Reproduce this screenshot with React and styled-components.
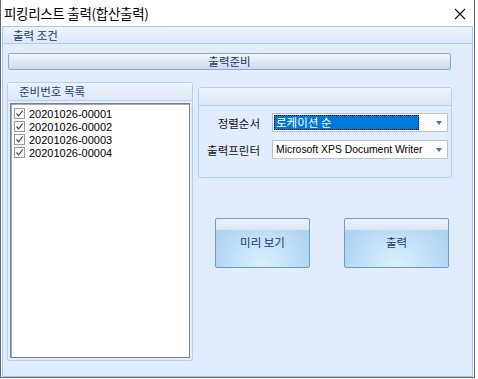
import React from 'react'
import styled, { createGlobalStyle } from 'styled-components'

const items = ['20201026-00001', '20201026-00002', '20201026-00003', '20201026-00004']

const App = () => {
  return (
    <>
      <Global />
      <Window>
        <TitleBar>
          <Title>피킹리스트 출력(합산출력)</Title>
          <Close width="12" height="12" viewBox="0 0 12 12">
            <path d="M1 1 L11 11 M11 1 L1 11" stroke="#111" strokeWidth="1.1" fill="none" />
          </Close>
        </TitleBar>
        <Panel>
          <SectionHeader>출력 조건</SectionHeader>
          <Content>
            <PrepBar>출력준비</PrepBar>
            <Columns>
              <Group>
                <GroupHeader>준비번호 목록</GroupHeader>
                <ListBox>
                  {items.map((it) => (
                    <Item key={it}>
                      <Check>
                        <svg width="9" height="9" viewBox="0 0 9 9">
                          <path d="M1.5 4.5 L3.6 6.8 L7.8 1.5" stroke="#444" strokeWidth="1.2" fill="none" />
                        </svg>
                      </Check>
                      {it}
                    </Item>
                  ))}
                </ListBox>
              </Group>
              <RightCol>
                <OptGroup>
                  <GroupHeader />
                  <Form>
                    <Label>정렬순서</Label>
                    <Combo>
                      <Selected>로케이션 순</Selected>
                      <Arrow />
                    </Combo>
                    <Label>출력프린터</Label>
                    <Combo>
                      <Value>Microsoft XPS Document Writer</Value>
                      <Arrow />
                    </Combo>
                  </Form>
                </OptGroup>
                <Buttons>
                  <BigButton $w={95}><span>미리 보기</span></BigButton>
                  <BigButton $w={105}><span>출력</span></BigButton>
                </Buttons>
              </RightCol>
            </Columns>
          </Content>
        </Panel>
      </Window>
    </>
  )
}

export default App

const Global = createGlobalStyle`
body {
  margin: 0;
  background: #ffffff;
  font-family: "Noto Sans CJK KR", "Liberation Sans", sans-serif;
}
`
const Window = styled.div`
width: 475px;
height: 378px;
box-sizing: border-box;
border: 1px solid #5e6a78;
border-top: none;
display: flex;
flex-direction: column;
background: #ffffff;
`
const TitleBar = styled.div`
height: 26px;
display: flex;
align-items: center;
justify-content: space-between;
padding: 0 8px 0 3px;
`
const Title = styled.div`
font-size: 13.5px;
color: #000;
letter-spacing: -0.3px;
line-height: 16px;
margin-top: -1px;
`
const Close = styled.svg`
display: block;
margin-top: 1px;
`
const Panel = styled.div`
flex: 1;
margin: 0 0 0 1px;
width: 471px;
box-sizing: border-box;
border: 1px solid #a9c7ec;
background: #e1edfd;
display: flex;
flex-direction: column;
`
const SectionHeader = styled.div`
height: 17px;
box-sizing: border-box;
border-bottom: 1px solid #b3cdef;
background: linear-gradient(#edf4fd, #dbe8f9);
font-size: 11.5px;
line-height: 16px;
color: #1d3766;
padding-left: 10px;
`
const Content = styled.div`
padding: 9px 0 0 5px;
display: flex;
flex-direction: column;
`
const PrepBar = styled.div`
width: 443px;
height: 17px;
box-sizing: border-box;
border: 1px solid #8eaad2;
border-radius: 2px;
background: linear-gradient(#f3f7fc 0%, #e3ecf7 40%, #cbdaee 100%);
font-size: 11.5px;
line-height: 14px;
color: #1d3766;
text-align: center;
`
const Columns = styled.div`
display: flex;
margin-top: 12px;
margin-left: -1px;
gap: 5px;
`
const Group = styled.div`
width: 186px;
height: 279px;
box-sizing: border-box;
border: 1px solid #b5cfef;
border-radius: 3px;
display: flex;
flex-direction: column;
`
const GroupHeader = styled.div`
height: 18px;
flex: none;
box-sizing: border-box;
border-bottom: 1px solid #b5cfef;
background: linear-gradient(#eef4fd, #dbe8f9);
font-size: 11.5px;
line-height: 17px;
color: #1d3e78;
padding-left: 11px;
`
const ListBox = styled.div`
margin: 2px 2px 0 2px;
height: 255px;
box-sizing: border-box;
border: 1px solid #7c8189;
box-shadow: inset 1px 1px 0 #a5a9b0;
background: #fff;
padding: 3px 0 0 3px;
`
const Item = styled.div`
height: 13px;
display: flex;
align-items: center;
font-family: "Liberation Sans", sans-serif;
font-size: 11px;
color: #000;
`
const Check = styled.div`
width: 11px;
height: 11px;
box-sizing: border-box;
border: 1px solid #9a9a9a;
background: #fff;
margin-right: 4px;
display: flex;
align-items: center;
justify-content: center;
`
const RightCol = styled.div`
display: flex;
flex-direction: column;
padding-top: 5px;
`
const OptGroup = styled.div`
width: 254px;
height: 91px;
box-sizing: border-box;
border: 1px solid #b5cfef;
border-radius: 3px;
display: flex;
flex-direction: column;
`
const Form = styled.div`
display: grid;
grid-template-columns: 61px 176px;
column-gap: 12px;
row-gap: 8px;
padding-top: 7px;
align-items: center;
`
const Label = styled.div`
text-align: right;
font-size: 11.5px;
line-height: 14px;
color: #111;
`
const Combo = styled.div`
height: 19px;
box-sizing: border-box;
border: 1px solid #b8c3d0;
background: #fff;
display: flex;
align-items: center;
padding: 1px;
`
const Selected = styled.div`
flex: 1;
height: 15px;
margin-right: 17px;
box-sizing: border-box;
background: #0078d7;
outline: 1px dotted #000;
outline-offset: -1px;
color: #fff;
font-size: 11.5px;
line-height: 14px;
padding-left: 2px;
`
const Value = styled.div`
flex: 1;
font-family: "Liberation Sans", sans-serif;
font-size: 10.4px;
color: #000;
padding-left: 2px;
white-space: nowrap;
`
const Arrow = styled.div`
width: 0;
height: 0;
border-left: 3.5px solid transparent;
border-right: 3.5px solid transparent;
border-top: 4px solid #4a70aa;
margin-right: 4px;
flex: none;
`
const Buttons = styled.div`
display: flex;
gap: 34px;
margin-top: 40px;
padding-left: 17px;
`
const BigButton = styled.div`
width: ${(p) => p.$w}px;
height: 50px;
box-sizing: border-box;
border: 1px solid #6b9bd9;
border-radius: 2px;
background:
  linear-gradient(#eaf1fa, #d9e5f4) top / 100% 11px no-repeat,
  radial-gradient(ellipse at 50% 100%, #ddf1fc 0%, #bcdcf5 55%, #a6ccef 100%);
display: flex;
align-items: center;
justify-content: center;
span {
  font-size: 11.5px;
  color: #1d3766;
  line-height: 14px;
  margin-top: -2px;
}
`
